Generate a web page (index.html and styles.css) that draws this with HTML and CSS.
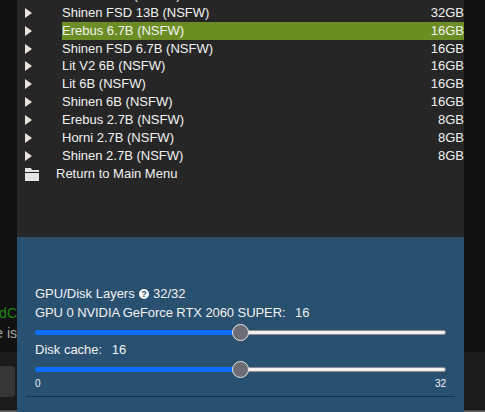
FILE: index.html
```html
<!DOCTYPE html>
<html lang="en">
<head>
    <meta charset="UTF-8">
    <title>Load Model</title>
    <link rel="stylesheet" href="styles.css">
</head>
<body>
    <div class="gutter gutter-left">
        <div class="console-line console-green">dC</div>
        <div class="console-line console-grey">e is</div>
        <div class="footer-strip"><div class="stub-button"></div></div>
    </div>

    <div class="popup">
        <div class="model-list">
            <div class="model-row"><span class="arrow"></span><span class="model-name">Erebus 13B (NSFW)</span><span class="model-size">32GB</span></div>
            <div class="model-row"><span class="arrow"></span><span class="model-name">Shinen FSD 13B (NSFW)</span><span class="model-size">32GB</span></div>
            <div class="model-row"><span class="arrow"></span><span class="model-name selected">Erebus 6.7B (NSFW)<span class="model-size">16GB</span></span></div>
            <div class="model-row"><span class="arrow"></span><span class="model-name">Shinen FSD 6.7B (NSFW)</span><span class="model-size">16GB</span></div>
            <div class="model-row tight"><span class="arrow"></span><span class="model-name">Lit V2 6B (NSFW)</span><span class="model-size">16GB</span></div>
            <div class="model-row"><span class="arrow"></span><span class="model-name">Lit 6B (NSFW)</span><span class="model-size">16GB</span></div>
            <div class="model-row"><span class="arrow"></span><span class="model-name">Shinen 6B (NSFW)</span><span class="model-size">16GB</span></div>
            <div class="model-row"><span class="arrow"></span><span class="model-name">Erebus 2.7B (NSFW)</span><span class="model-size">8GB</span></div>
            <div class="model-row"><span class="arrow"></span><span class="model-name">Horni 2.7B (NSFW)</span><span class="model-size">8GB</span></div>
            <div class="model-row"><span class="arrow"></span><span class="model-name">Shinen 2.7B (NSFW)</span><span class="model-size">8GB</span></div>
            <div class="model-row">
                <svg class="folder" width="14" height="13" viewBox="0 0 14 13"><path d="M0 0h6l1 2h7v2H0z" fill="#e4e4e4"/><path d="M0 5h14v8H0z" fill="#e4e4e4"/></svg>
                <span class="model-name">Return to Main Menu</span>
            </div>
        </div>

        <div class="settings">
            <div class="setting-label">GPU/Disk Layers
                <svg class="help" width="10" height="10" viewBox="0 0 10 10"><circle cx="5" cy="5" r="5" fill="#fff"/><text x="5" y="8" class="help-mark">?</text></svg>
                32/32</div>
            <div class="setting-label gpu-label">GPU 0 NVIDIA GeForce RTX 2060 SUPER: <span class="value">16</span></div>
            <div class="slider">
                <div class="slider-fill" style="width: 50%"></div>
                <div class="slider-thumb"></div>
                <div class="slider-rest"></div>
            </div>
            <div class="setting-label">Disk cache: <span class="value">16</span></div>
            <div class="slider">
                <div class="slider-fill" style="width: 50%"></div>
                <div class="slider-thumb"></div>
                <div class="slider-rest"></div>
            </div>
            <div class="slider-range"><span>0</span><span>32</span></div>
            <hr class="settings-rule">
        </div>
    </div>

    <div class="gutter gutter-right">
        <div class="footer-strip"></div>
    </div>
</body>
</html>
```

FILE: styles.css
```css
html, body {
    margin: 0;
    height: 412px;
    overflow: hidden;
}
body {
    display: flex;
    font-family: "Liberation Sans", Arial, sans-serif;
    font-size: 13px;
    color: #f2f2f2;
    background-color: #111;
}
.gutter {
    display: flex;
    flex-direction: column;
    flex: none;
    overflow: hidden;
}
.gutter-left {
    width: 17px;
}
.gutter-right {
    width: 21px;
    justify-content: flex-end;
}
.console-line {
    display: flex;
    justify-content: flex-end;
    white-space: nowrap;
    font-size: 14px;
    line-height: 20px;
}
.console-green {
    margin-top: 303px;
    color: #1f8a12;
}
.console-grey {
    color: #a8a8a8;
}
.footer-strip {
    height: 60px;
    margin-top: auto;
    padding-top: 14px;
    box-sizing: border-box;
    background-color: #1b1b1b;
    border-bottom: 2px solid #555;
}
.stub-button {
    width: 15px;
    height: 31px;
    background-color: #363636;
    border-radius: 0 4px 4px 0;
}
.popup {
    display: flex;
    flex-direction: column;
    flex: 1;
    background-color: #262626;
}
.model-list {
    height: 251px;
    margin-top: -14px;
    flex: none;
}
.model-row {
    display: flex;
    align-items: center;
    height: 18px;
    line-height: 18px;
    white-space: nowrap;
}
.tight {
    margin-top: -1px;
}
.arrow {
    flex: none;
    width: 0;
    height: 0;
    margin: 0 30px 0 8px;
    border-left: 7px solid #e8e4dc;
    border-top: 5.5px solid transparent;
    border-bottom: 5.5px solid transparent;
}
.model-name {
    flex: 1;
}
.model-size {
    flex: none;
}
.selected {
    display: flex;
    justify-content: space-between;
    height: 18px;
    background-color: #6b8e23;
}
.folder {
    flex: none;
    margin: 0 17px 0 8px;
}
.settings {
    flex: 1;
    padding: 48px 18px 0;
    background-color: #2a5070;
    min-height: 0;
}
.setting-label {
    line-height: 18px;
}
.help {
    margin-left: 1px;
    vertical-align: -1px;
}
.help-mark {
    font-size: 9px;
    font-weight: bold;
    text-anchor: middle;
    fill: #2a5070;
}
.value {
    margin-left: 6px;
}
.gpu-label {
    margin-top: 1px;
    letter-spacing: -0.08px;
}
.slider {
    display: flex;
    align-items: center;
    height: 18px;
    margin-top: 1px;
}
.slider-fill {
    flex: none;
    height: 5px;
    background-color: #0d6efd;
    border-radius: 3px 0 0 3px;
}
.slider-thumb {
    flex: none;
    width: 17px;
    height: 17px;
    margin-left: -9px;
    margin-right: -8px;
    box-sizing: border-box;
    background-color: #6c6c75;
    border: 1px solid #e8e8e8;
    border-radius: 50%;
    position: relative;
    z-index: 1;
}
.slider-rest {
    flex: 1;
    height: 5px;
    box-sizing: border-box;
    background-color: #efefef;
    border: 1px solid #8b8b94;
    border-radius: 0 3px 3px 0;
}
.slider-range {
    display: flex;
    justify-content: space-between;
    font-size: 10px;
    line-height: 12px;
}
.settings-rule {
    margin: 6px -9px 0;
    border: none;
    border-top: 1px solid #17304f;
}
```
